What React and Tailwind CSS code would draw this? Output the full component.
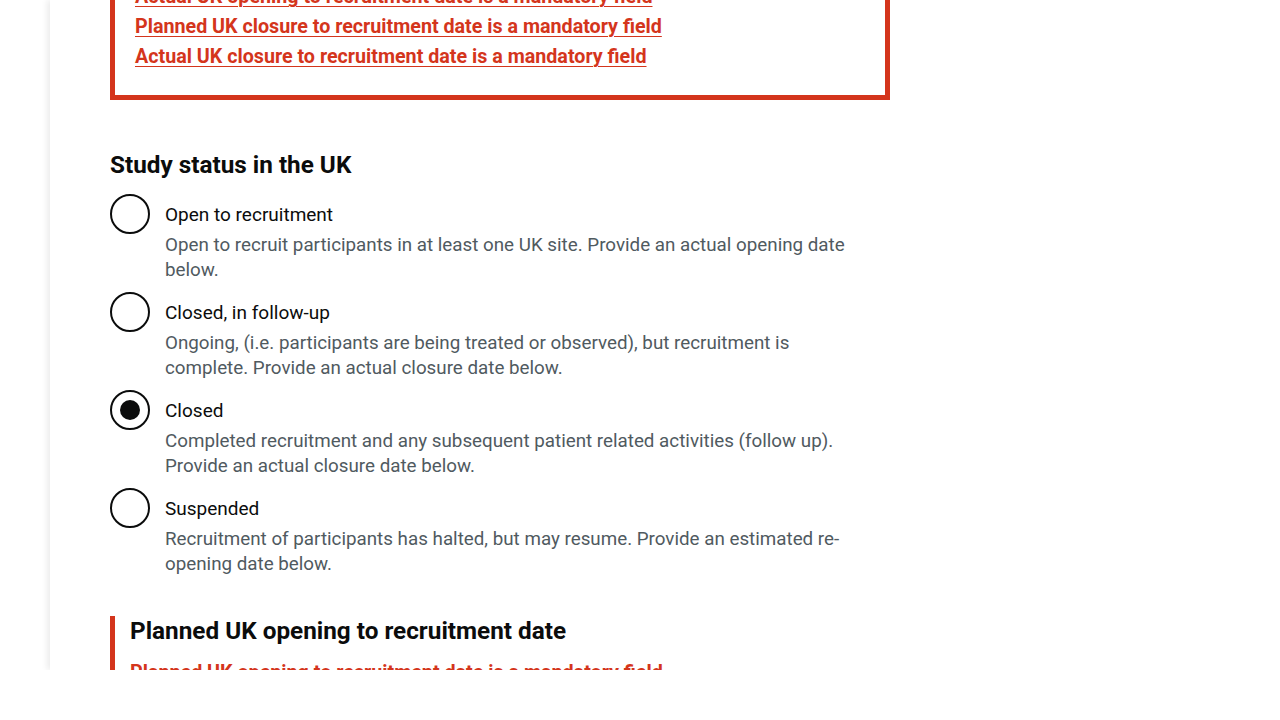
import React from 'react'

const ERRORS = [
  'Actual UK opening to recruitment date is a mandatory field',
  'Planned UK closure to recruitment date is a mandatory field',
  'Actual UK closure to recruitment date is a mandatory field',
]

const OPTIONS = [
  {
    label: 'Open to recruitment',
    hint: 'Open to recruit participants in at least one UK site. Provide an actual opening date below.',
  },
  {
    label: 'Closed, in follow-up',
    hint: 'Ongoing, (i.e. participants are being treated or observed), but recruitment is complete. Provide an actual closure date below.',
  },
  {
    label: 'Closed',
    hint: 'Completed recruitment and any subsequent patient related activities (follow up). Provide an actual closure date below.',
    checked: true,
  },
  {
    label: 'Suspended',
    hint: 'Recruitment of participants has halted, but may resume. Provide an estimated re-opening date below.',
  },
]

function Radio({ checked }) {
  return (
    <span className="flex h-10 w-10 shrink-0 items-center justify-center rounded-full border-2 border-[#0b0c0c] bg-white">
      {checked && <span className="h-5 w-5 rounded-full bg-[#0b0c0c]" />}
    </span>
  )
}

export default function App() {
  return (
    <div className="h-[720px] w-[1280px] bg-white font-['Roboto',sans-serif] text-[#0b0c0c]">
      <div className="flex h-[670px] overflow-hidden">
        <div className="w-[50px] shrink-0" />
        <main className="flex-1 pl-[60px] shadow-[-3px_0_6px_rgba(0,0,0,0.08)]">
          <div className="w-[780px]">
            {/* error summary */}
            <div className="-mt-[43px] border-[5px] border-[#d4351c] px-5 pb-[23px] pt-[20px]">
              <ul>
                {ERRORS.map((err) => (
                  <li key={err}>
                    <a href="#" className="text-[19.7px] font-bold leading-[30px] text-[#d4351c] underline decoration-1 underline-offset-[3px]">
                      {err}
                    </a>
                  </li>
                ))}
              </ul>
            </div>

            {/* study status */}
            <h2 className="mt-[50px] text-[24.3px] font-bold leading-[30px]">Study status in the UK</h2>
            <div className="mt-[14px] flex flex-col gap-[9px]">
              {OPTIONS.map((opt) => (
                <div key={opt.label} className="flex gap-[15px]">
                  <Radio checked={opt.checked} />
                  <div className="w-[690px] pt-[8px]">
                    <p className="text-[19px] leading-[25px]">{opt.label}</p>
                    <p className="mt-[6px] text-[18.8px] leading-[25px] text-[#505a5f]">{opt.hint}</p>
                  </div>
                </div>
              ))}
            </div>

            {/* planned opening */}
            <div className="mt-[39px] border-l-[5px] border-[#d4351c] pl-[15px]">
              <h2 className="text-[24.3px] font-bold leading-[30px]">Planned UK opening to recruitment date</h2>
              <p className="mt-[14px] text-[19.7px] font-bold leading-[25px] text-[#d4351c]">
                Planned UK opening to recruitment date is a mandatory field
              </p>
            </div>
          </div>
        </main>
      </div>
    </div>
  )
}
